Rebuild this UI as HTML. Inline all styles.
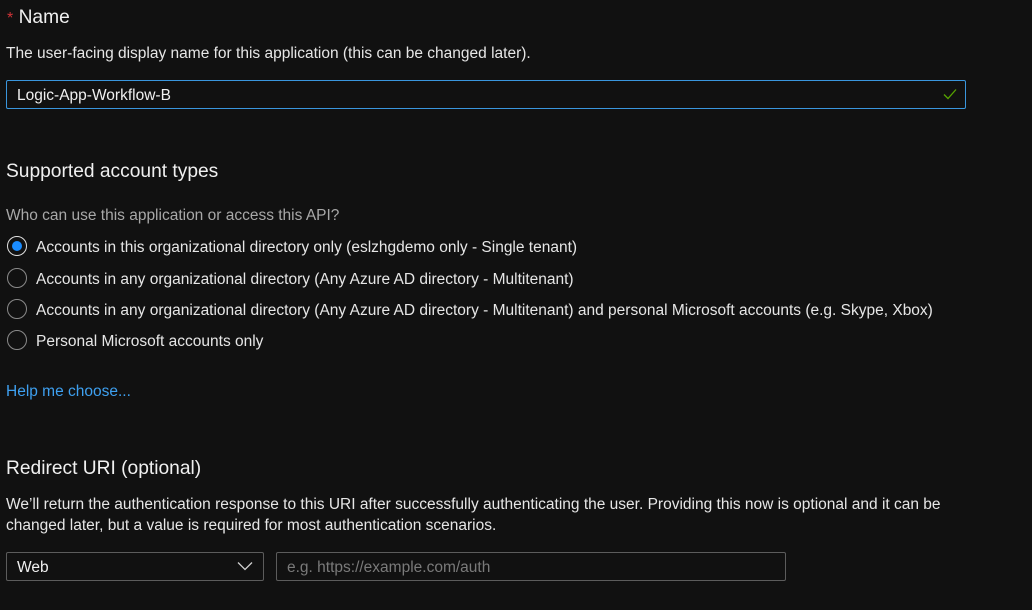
<!DOCTYPE html>
<html><head><style>
html,body{margin:0;padding:0;background:#111111;width:1032px;height:610px;overflow:hidden;font-family:"Liberation Sans",sans-serif;color:#e6e6e6;}
.a{position:absolute;white-space:nowrap;}
.h{font-size:19.2px;color:#f0f0f0;}
.t{font-size:15.5px;}
.r{position:absolute;left:7px;width:20px;height:20px;border:1px solid #8a8a8a;border-radius:50%;box-sizing:border-box;}
.r.on{border-color:#e0e0e0;}
.r.on::after{content:"";position:absolute;left:4px;top:4px;width:10px;height:10px;border-radius:50%;background:#1a8cff;}
.box{position:absolute;border:1px solid #5c5c5c;border-radius:2px;box-sizing:border-box;background:#111;}
</style></head><body>
<div class="a h" style="left:7px;top:7px;"><span style="color:#d13438;font-size:16px;">*</span> Name</div>
<div class="a t" style="left:6px;top:45px;">The user-facing display name for this application (this can be changed later).</div>
<div class="box" style="left:6px;top:80px;width:960px;height:29px;border-color:#3a96dd;"></div>
<div class="a t" style="left:17px;top:87px;color:#f0f0f0;">Logic-App-Workflow-B</div>
<svg class="a" style="left:942px;top:87px;" width="16" height="14" viewBox="0 0 16 14"><path d="M2 7.5L6 11.5L14 2.5" stroke="#57a300" stroke-width="1.3" fill="none"/></svg>
<div class="a h" style="left:6px;top:161px;">Supported account types</div>
<div class="a t" style="left:6px;top:207px;color:#a8a8a8;">Who can use this application or access this API?</div>
<div class="r on" style="top:236px;"></div>
<div class="a t" style="left:36px;top:239px;">Accounts in this organizational directory only (eslzhgdemo only - Single tenant)</div>
<div class="r" style="top:268px;"></div>
<div class="a t" style="left:36px;top:271px;">Accounts in any organizational directory (Any Azure AD directory - Multitenant)</div>
<div class="r" style="top:299px;"></div>
<div class="a t" style="left:36px;top:302px;">Accounts in any organizational directory (Any Azure AD directory - Multitenant) and personal Microsoft accounts (e.g. Skype, Xbox)</div>
<div class="r" style="top:330px;"></div>
<div class="a t" style="left:36px;top:333px;">Personal Microsoft accounts only</div>
<div class="a t" style="left:6px;top:383px;color:#3ea0f0;">Help me choose...</div>
<div class="a h" style="left:6px;top:458px;">Redirect URI (optional)</div>
<div class="a t" style="left:6px;top:496px;">We’ll return the authentication response to this URI after successfully authenticating the user. Providing this now is optional and it can be</div>
<div class="a t" style="left:6px;top:517px;">changed later, but a value is required for most authentication scenarios.</div>
<div class="box" style="left:6px;top:552px;width:258px;height:29px;"></div>
<div class="a t" style="left:17px;top:559px;color:#f0f0f0;">Web</div>
<svg class="a" style="left:237px;top:561px;" width="16" height="10" viewBox="0 0 16 10"><path d="M1 1.5L8 8.5L15 1.5" stroke="#d0d0d0" stroke-width="1.3" fill="none"/></svg>
<div class="box" style="left:276px;top:552px;width:510px;height:29px;"></div>
<div class="a t" style="left:287px;top:559px;color:#7a7a7a;">e.g. https://example.com/auth</div>
</body></html>
